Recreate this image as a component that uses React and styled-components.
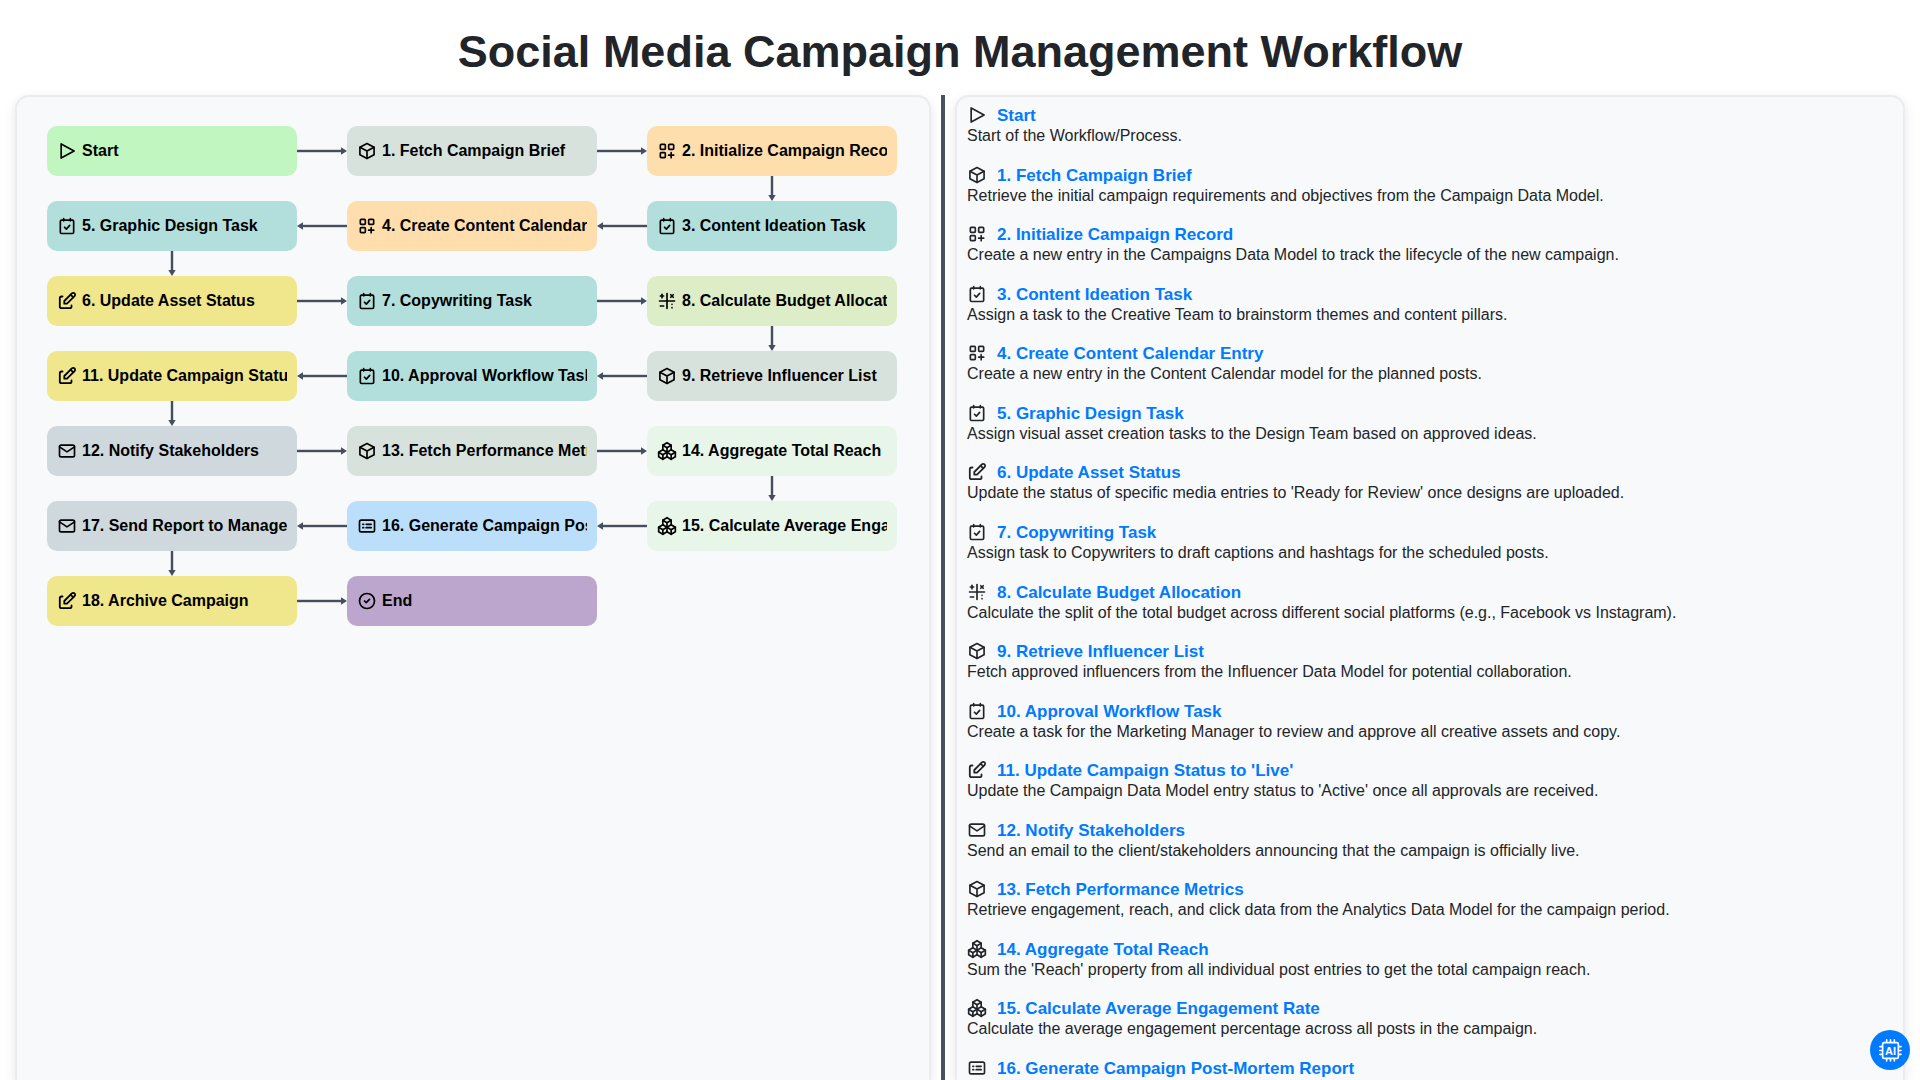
import React from "react";
import styled, { createGlobalStyle } from "styled-components";
import {
  TbLayoutGridAdd,
  TbEdit,
  TbMathSymbols,
  TbMail,
  TbPackages,
  TbCircleCheck,
} from "react-icons/tb";

const GlobalStyle = createGlobalStyle`
  html, body { margin: 0; padding: 0; height: 100%; overflow: hidden; background: #fff; }
  body { font-family: "Liberation Sans", Arial, sans-serif; color: #212529; }
`;

const Page = styled.div`
  height: 100vh;
  display: flex;
  flex-direction: column;
  overflow: hidden;
`;
const Title = styled.h1`
  margin: 0;
  height: 95px;
  flex: none;
  box-sizing: border-box;
  padding-top: 26px;
  text-align: center;
  font-size: 45px;
  line-height: 52px;
  font-weight: 700;
  color: #212529;
`;
const Workspace = styled.div`
  flex: 1;
  min-height: 0;
  display: flex;
  gap: 10px;
  padding: 0 15px;
  align-items: stretch;
`;
const Panel = styled.section`
  box-sizing: border-box;
  background: #f8f9fa;
  border: 2px solid #eaecf0;
  border-bottom: none;
  border-radius: 14px 14px 0 0;
  box-shadow: 0 4px 12px rgba(0, 0, 0, 0.1);
  overflow: hidden;
`;
const DiagramPanel = styled(Panel)`
  flex: 0 0 916px;
  padding: 29px 30px;
`;
const DetailPanel = styled(Panel)`
  flex: 1;
  min-width: 0;
  padding: 9.2px 10px;
`;
const Divider = styled.div`
  flex: 0 0 4px;
  background: #4a5160;
`;

const FlowGrid = styled.div`
  display: grid;
  grid-template-columns: 250px 50px 250px 50px 250px;
  grid-auto-rows: auto;
`;
const Node = styled.div`
  height: 50px;
  box-sizing: border-box;
  padding: 0 10px;
  display: flex;
  align-items: center;
  gap: 5px;
  border-radius: 10px;
  background: ${(p) => p.$bg};
  color: #000;
  font-size: 16px;
  font-weight: 700;
`;
const NodeLabel = styled.span`
  flex: 1;
  min-width: 0;
  overflow: hidden;
  white-space: nowrap;
`;
const IconSlot = styled.span`
  flex: none;
  width: 20px;
  height: 20px;
  display: inline-flex;
  color: #000;
  svg { width: 20px; height: 20px; display: block; }
`;
const DetailIconSlot = styled(IconSlot)`
  color: #212529;
  margin-top: -2px;
`;
const LargeEdit = styled(TbEdit)`
  transform: scale(1.08);
`;
const HCell = styled.div`
  display: flex;
  align-items: center;
  height: 50px;
  svg { display: block; }
`;
const VCell = styled.div`
  height: 25px;
  display: flex;
  justify-content: center;
  svg { display: block; }
`;
const Spacer = styled.div``;

const ARROW = "#464d5c";
const ArrowH = ({ dir }) => (
  <HCell>
    <svg width="50" height="10" viewBox="0 0 50 10" aria-hidden="true">
      {dir === "right" ? (
        <>
          <rect x="0" y="3.8" width="45" height="2.4" fill={ARROW} />
          <path d="M44 1.3 L50 5 L44 8.7 Z" fill={ARROW} />
        </>
      ) : (
        <>
          <rect x="5" y="3.8" width="45" height="2.4" fill={ARROW} />
          <path d="M6 1.3 L0 5 L6 8.7 Z" fill={ARROW} />
        </>
      )}
    </svg>
  </HCell>
);
const ArrowV = () => (
  <VCell>
    <svg width="10" height="25" viewBox="0 0 10 25" aria-hidden="true">
      <rect x="3.8" y="0" width="2.4" height="20" fill={ARROW} />
      <path d="M1.3 19 L5 25 L8.7 19 Z" fill={ARROW} />
    </svg>
  </VCell>
);

const strokeProps = {
  viewBox: "0 0 24 24",
  fill: "none",
  stroke: "currentColor",
  strokeWidth: 2,
  strokeLinecap: "round",
  strokeLinejoin: "round",
};
const PlayIcon = () => (
  <svg {...strokeProps}>
    <path d="M5 3.5 L20.5 12 L5 20.5 Z" />
  </svg>
);
const BoxIcon = () => (
  <svg {...strokeProps}>
    <path d="M12 3 L20.5 7.6 V16.4 L12 21 L3.5 16.4 V7.6 Z" />
    <path d="M3.5 7.6 L12 12 L20.5 7.6 M12 12 V21" />
  </svg>
);
const CalendarTask = () => (
  <svg {...strokeProps}>
    <rect x="4" y="5" width="16" height="16" rx="1.5" />
    <path d="M8 3v3M16 3v3M9 13.5l2.2 2.2 4-4.4" />
  </svg>
);
const ListCard = () => (
  <svg {...strokeProps}>
    <rect x="3" y="5" width="18" height="14" rx="2" />
    <path d="M7 10h1M7 14h1M11 10h6M11 14h6" />
  </svg>
);
const ICONS = {
  play: PlayIcon,
  box: BoxIcon,
  grid: TbLayoutGridAdd,
  task: CalendarTask,
  edit: LargeEdit,
  math: TbMathSymbols,
  mail: TbMail,
  packages: TbPackages,
  report: ListCard,
  done: TbCircleCheck,
};
const COLORS = {
  play: "#c1f6c1",
  box: "#d8e2dc",
  grid: "#ffdead",
  task: "#b2dfdb",
  edit: "#f0e68c",
  math: "#dcedc8",
  mail: "#cfd8dc",
  packages: "#e8f5e9",
  report: "#bbdefb",
  done: "#bca6cd",
};

const FlowNode = ({ icon, label }) => {
  const Ico = ICONS[icon];
  return (
    <Node $bg={COLORS[icon]}>
      <IconSlot>
        <Ico />
      </IconSlot>
      <NodeLabel>{label}</NodeLabel>
    </Node>
  );
};

const Row = ({ a, b, c, dir }) => (
  <>
    {a ? <FlowNode {...a} /> : <Spacer />}
    {a && b ? <ArrowH dir={dir} /> : <Spacer />}
    {b ? <FlowNode {...b} /> : <Spacer />}
    {b && c ? <ArrowH dir={dir} /> : <Spacer />}
    {c ? <FlowNode {...c} /> : <Spacer />}
  </>
);
const Drop = ({ col }) => (
  <>
    {col === 0 ? <ArrowV /> : <Spacer />}
    <Spacer />
    <Spacer />
    <Spacer />
    {col === 4 ? <ArrowV /> : <Spacer />}
  </>
);

const n = (icon, label) => ({ icon, label });

const DETAILS = [
  ["play", "Start", "Start of the Workflow/Process."],
  ["box", "1. Fetch Campaign Brief", "Retrieve the initial campaign requirements and objectives from the Campaign Data Model."],
  ["grid", "2. Initialize Campaign Record", "Create a new entry in the Campaigns Data Model to track the lifecycle of the new campaign."],
  ["task", "3. Content Ideation Task", "Assign a task to the Creative Team to brainstorm themes and content pillars."],
  ["grid", "4. Create Content Calendar Entry", "Create a new entry in the Content Calendar model for the planned posts."],
  ["task", "5. Graphic Design Task", "Assign visual asset creation tasks to the Design Team based on approved ideas."],
  ["edit", "6. Update Asset Status", "Update the status of specific media entries to 'Ready for Review' once designs are uploaded."],
  ["task", "7. Copywriting Task", "Assign task to Copywriters to draft captions and hashtags for the scheduled posts."],
  ["math", "8. Calculate Budget Allocation", "Calculate the split of the total budget across different social platforms (e.g., Facebook vs Instagram)."],
  ["box", "9. Retrieve Influencer List", "Fetch approved influencers from the Influencer Data Model for potential collaboration."],
  ["task", "10. Approval Workflow Task", "Create a task for the Marketing Manager to review and approve all creative assets and copy."],
  ["edit", "11. Update Campaign Status to 'Live'", "Update the Campaign Data Model entry status to 'Active' once all approvals are received."],
  ["mail", "12. Notify Stakeholders", "Send an email to the client/stakeholders announcing that the campaign is officially live."],
  ["box", "13. Fetch Performance Metrics", "Retrieve engagement, reach, and click data from the Analytics Data Model for the campaign period."],
  ["packages", "14. Aggregate Total Reach", "Sum the 'Reach' property from all individual post entries to get the total campaign reach."],
  ["packages", "15. Calculate Average Engagement Rate", "Calculate the average engagement percentage across all posts in the campaign."],
  ["report", "16. Generate Campaign Post-Mortem Report", ""],
];

const DetailItem = styled.article`
  height: 59.55px;
`;
const DetailHead = styled.div`
  display: flex;
  align-items: center;
  gap: 10px;
  height: 20px;
`;
const DetailTitle = styled.a`
  color: #007bff;
  font-size: 17px;
  line-height: 20px;
  font-weight: 700;
  text-decoration: none;
`;
const DetailText = styled.p`
  margin: 0;
  font-size: 16px;
  line-height: 20.5px;
  color: #212529;
`;
const AiButton = styled.button`
  position: fixed;
  right: 10px;
  bottom: 10px;
  width: 40px;
  height: 40px;
  padding: 0;
  border: none;
  border-radius: 50%;
  background: #007bff;
  color: #fff;
  display: flex;
  align-items: center;
  justify-content: center;
`;
const AiLetters = styled.text`
  font-family: "Liberation Sans", Arial, sans-serif;
  font-size: 11.5px;
  font-weight: 700;
  fill: #fff;
`;

export default function App() {
  return (
    <Page>
      <GlobalStyle />
      <Title>Social Media Campaign Management Workflow</Title>
      <Workspace>
        <DiagramPanel>
          <FlowGrid>
            <Row dir="right" a={n("play", "Start")} b={n("box", "1. Fetch Campaign Brief")} c={n("grid", "2. Initialize Campaign Record")} />
            <Drop col={4} />
            <Row dir="left" a={n("task", "5. Graphic Design Task")} b={n("grid", "4. Create Content Calendar Entry")} c={n("task", "3. Content Ideation Task")} />
            <Drop col={0} />
            <Row dir="right" a={n("edit", "6. Update Asset Status")} b={n("task", "7. Copywriting Task")} c={n("math", "8. Calculate Budget Allocation")} />
            <Drop col={4} />
            <Row dir="left" a={n("edit", "11. Update Campaign Status to 'Live'")} b={n("task", "10. Approval Workflow Task")} c={n("box", "9. Retrieve Influencer List")} />
            <Drop col={0} />
            <Row dir="right" a={n("mail", "12. Notify Stakeholders")} b={n("box", "13. Fetch Performance Metrics")} c={n("packages", "14. Aggregate Total Reach")} />
            <Drop col={4} />
            <Row dir="left" a={n("mail", "17. Send Report to Management")} b={n("report", "16. Generate Campaign Post-Mortem Report")} c={n("packages", "15. Calculate Average Engagement Rate")} />
            <Drop col={0} />
            <Row dir="right" a={n("edit", "18. Archive Campaign")} b={n("done", "End")} />
          </FlowGrid>
        </DiagramPanel>
        <Divider />
        <DetailPanel>
          {DETAILS.map(([icon, title, text]) => {
            const Ico = ICONS[icon];
            return (
              <DetailItem key={title}>
                <DetailHead>
                  <DetailIconSlot>
                    <Ico />
                  </DetailIconSlot>
                  <DetailTitle href="#">{title}</DetailTitle>
                </DetailHead>
                {text && <DetailText>{text}</DetailText>}
              </DetailItem>
            );
          })}
        </DetailPanel>
      </Workspace>
      <AiButton aria-label="AI assistant">
        <svg width="23" height="23" viewBox="0 0 24 24" fill="none" stroke="#fff" strokeWidth="1.7" strokeLinecap="round">
          <rect x="3.8" y="3.8" width="16.4" height="16.4" rx="1.5" />
          <path d="M8 .9v2M12 .9v2M16 .9v2M8 21v2M12 21v2M16 21v2M.9 8h2M.9 12h2M.9 16h2M21 8h2M21 12h2M21 16h2" />
          <AiLetters x="12" y="16.2" textAnchor="middle" stroke="none">AI</AiLetters>
        </svg>
      </AiButton>
    </Page>
  );
}
